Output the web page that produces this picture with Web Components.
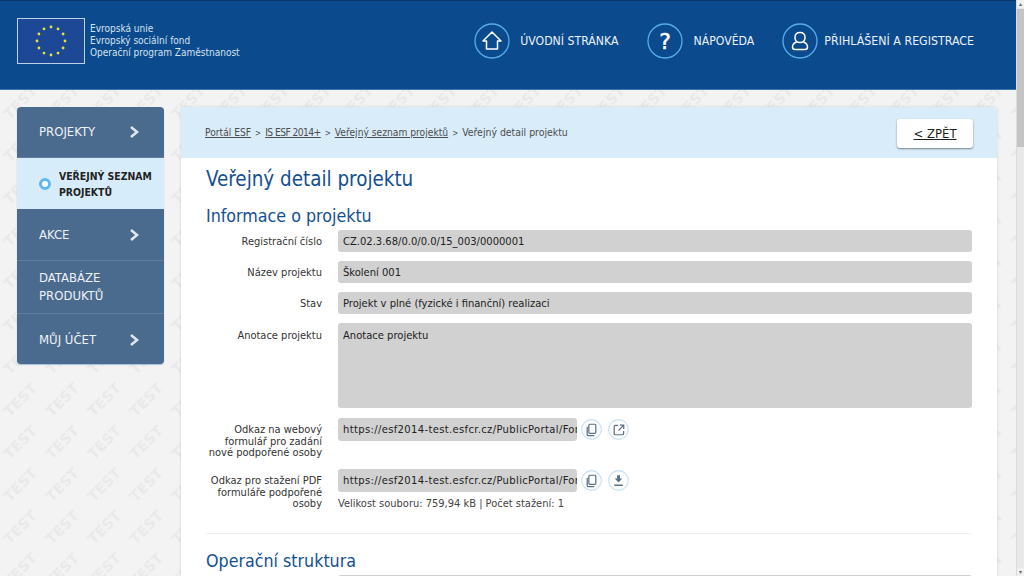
<!DOCTYPE html>
<html lang="cs"><head><meta charset="utf-8"><title>Veřejný detail projektu</title>
<style>
html,body{margin:0;padding:0;height:576px;overflow:hidden;background:#f3f3f3}
body{font-family:"DejaVu Sans Condensed","DejaVu Sans",sans-serif;color:#333}
</style></head><body>
<esf-page>
  <esf-header slot="header">
    <esf-nav icon="home">ÚVODNÍ STRÁNKA</esf-nav>
    <esf-nav icon="help">NÁPOVĚDA</esf-nav>
    <esf-nav icon="user">PŘIHLÁŠENÍ A REGISTRACE</esf-nav>
  </esf-header>
  <esf-menu slot="menu">
    <esf-menu-item arrow h="51">PROJEKTY</esf-menu-item>
    <esf-menu-item active h="51">VEŘEJNÝ SEZNAM PROJEKTŮ</esf-menu-item>
    <esf-menu-item arrow h="52">AKCE</esf-menu-item>
    <esf-menu-item h="53">DATABÁZE PRODUKTŮ</esf-menu-item>
    <esf-menu-item arrow last h="50">MŮJ ÚČET</esf-menu-item>
  </esf-menu>
  <esf-card slot="main">
    <esf-crumbs>
      <a href="#">Portál ESF</a><i>&gt;</i><a href="#" class="n">IS ESF 2014+</a><i>&gt;</i><a href="#">Veřejný seznam projektů</a><i>&gt;</i><span style="font-size:10.400px">Veřejný detail projektu</span>
    </esf-crumbs>
    <esf-section>
      <h1 slot="title">Veřejný detail projektu</h1>
    </esf-section>
    <esf-form heading="Informace o projektu">
      <esf-row label="Registrační číslo" h="22">CZ.02.3.68/0.0/0.0/15_003/0000001</esf-row>
      <esf-row label="Název projektu" h="22">Školení 001</esf-row>
      <esf-row label="Stav" h="22">Projekt v plné (fyzické i finanční) realizaci</esf-row>
      <esf-row label="Anotace projektu" h="85" top>Anotace projektu</esf-row>
      <esf-row label="Odkaz na webový formulář pro zadání nové podpořené osoby" h="23" narrow url actions="copy,open" rowh="42" style="margin-top:1px">https://esf2014-test.esfcr.cz/PublicPortal/Forms/Detail</esf-row>
      <esf-row label="Odkaz pro stažení PDF formuláře podpořené osoby" h="23" narrow url actions="copy,download" note="Velikost souboru: 759,94 kB | Počet stažení: 1">https://esf2014-test.esfcr.cz/PublicPortal/Forms/Download</esf-row>
    </esf-form>
    <esf-form heading="Operační struktura" ruled>
      <esf-row label="" h="22"></esf-row>
    </esf-form>
  </esf-card>
</esf-page>
<script>
const ce=(n,c)=>customElements.define(n,c);
class Base extends HTMLElement{
  render(html){ if(!this.shadowRoot) this.attachShadow({mode:'open'}); this.shadowRoot.innerHTML=html; }
}
ce('esf-page',class extends Base{connectedCallback(){this.render(`<style>
:host{display:block;position:relative;width:1024px;height:576px;overflow:hidden}
.wm{position:absolute;inset:0;width:1016px;height:576px}
.shell{position:relative;display:flex;width:1024px;height:576px}
.col{width:1016px;display:flex;flex-direction:column;overflow:hidden}
.body{display:grid;grid-template-columns:147px 816px;column-gap:17px;padding:17px 0 0 17px;align-items:start;flex:none}
.sb{width:8px;height:576px;background:#e9e9e9;display:flex;flex-direction:column;box-sizing:border-box;border-left:1px solid #dcdcdc}
.up,.dn{height:8px;background:#f1f1f1;color:#666;font:6px "DejaVu Sans",sans-serif;text-align:center;line-height:8px;flex:none}
.th{height:138px;margin-top:1px;background:#c4c4c4;flex:none}
.sp{flex:1}
</style>
<svg class="wm" aria-hidden="true"><defs><pattern id="t" width="42" height="42.500" patternUnits="userSpaceOnUse" patternTransform="translate(0,-3)">
<text x="0" y="0" transform="translate(21,21) rotate(-45)" text-anchor="middle" dominant-baseline="middle" font-family="DejaVu Sans" font-size="14.500" font-weight="bold" fill="#e9e9e9">TEST</text></pattern></defs>
<rect y="90" width="1016" height="486" fill="url(#t)"/></svg>
<div class="shell"><div class="col"><slot name="header"></slot><div class="body"><slot name="menu"></slot><slot name="main"></slot></div></div>
<div class="sb"><div class="up">▴</div><div class="th"></div><div class="sp"></div><div class="dn">▾</div></div></div>`)}});
ce('esf-header',class extends Base{connectedCallback(){
 let stars='';for(let i=0;i<12;i++){const a=i*Math.PI/6;stars+=`<circle cx="${(34+14*Math.sin(a)).toFixed(1)}" cy="${(23-14*Math.cos(a)).toFixed(1)}" r="1.4" fill="#e9e23a"/>`}
 this.render(`<style>
:host{display:flex;flex:none;box-sizing:border-box;height:90px;background:#0b4a8d;border-top:1px solid #0a3668;border-bottom:1px solid #3a76b0;padding:17px 42px 0 17px;align-items:flex-start;justify-content:space-between}
.logo{display:flex;align-items:center;gap:5px;color:#d5e2ef;font-size:10px;line-height:12px}
svg{display:block}
nav{display:flex;gap:29px;margin-top:5px}
</style>
<div class="logo"><svg width="68" height="46" viewBox="0 0 68 46"><rect x=".5" y=".5" width="67" height="45" fill="#1d4896" stroke="#bcd0e6"/>${stars}</svg><div>Evropská unie<br>Evropský sociální fond<br>Operační program Zaměstnanost</div></div>
<nav><slot></slot></nav>`)}});
const navIcons={
 home:'<path d="M18 9 L27 18 H23.500 V26 H12.500 V18 H9 Z" fill="none" stroke="#fff" stroke-width="1.500" stroke-linejoin="round"/>',
 help:'<text x="18" y="26" text-anchor="middle" font-family="DejaVu Sans" font-size="22" fill="#fff" stroke="#fff" stroke-width=".5">?</text>',
 user:'<path d="M18 9.5c3 0 5 2 5 5s-2 5-5 5-5-2-5-5 2-5 5-5zM14.5 19c-2.5 1-4 3-4 5 0 1.600 1 2.500 2.500 2.500h10c1.500 0 2.500-.9 2.500-2.500 0-2-1.500-4-4-5" fill="none" stroke="#fff" stroke-width="1.500"/>'};
ce('esf-nav',class extends Base{connectedCallback(){const ic=this.getAttribute('icon'),u=ic==='user';this.render(`<style>
:host{display:flex;align-items:center;gap:${u?6:10}px;color:#eaf1f8;font-size:${u?12.3:12.2}px;${u?'margin-left:-1px;':''}}
svg{display:block;flex:none}
</style><svg width="36" height="36" viewBox="0 0 36 36"><circle cx="18" cy="18" r="17" fill="none" stroke="#58ade9" stroke-width="1.300"/>${navIcons[ic]}</svg><span><slot></slot></span>`);
}});
ce('esf-menu',class extends Base{connectedCallback(){this.render(`<style>
:host{display:block;width:147px;border-radius:4px;overflow:hidden;background:#4a6a8e;box-shadow:0 1px 1px rgba(90,140,190,.5)}
</style><slot></slot>`)}});
ce('esf-menu-item',class extends Base{connectedCallback(){
 const a=this.hasAttribute('active'),ar=this.hasAttribute('arrow'),last=this.hasAttribute('last');
 this.render(`<style>
:host{display:flex;box-sizing:border-box;align-items:center;height:${this.getAttribute('h')}px;padding:${last?'2px':'0'} ${a?'4px':ar?'24px':'22px'} 0 22px;color:#eef2f7;font-size:13px;line-height:18px;${!a&&!last?'border-bottom:1px solid #5f7d9e;':''}${a?'background:#d7ecfb;color:#222;font-weight:700;font-size:10.400px;line-height:16px;':''}}
.t{flex:1}
.dot{width:6px;height:6px;border:3px solid #5fb8ee;border-radius:50%;background:#fff;margin:0 8px 0 0;flex:none;box-sizing:content-box}
</style>${a?'<span class="dot"></span>':''}<span class="t"><slot></slot></span>${ar?'<svg width="11" height="14" viewBox="0 0 11 14"><path d="M2 2 L8 7 L2 12" fill="none" stroke="#dfe6ee" stroke-width="2.600"/></svg>':''}`);
}});
ce('esf-card',class extends Base{connectedCallback(){this.render(`<style>
:host{display:block;width:816px;height:469px;overflow:hidden;background:#fff;border-radius:3px 3px 0 0;box-shadow:0 0 3px rgba(0,0,0,.14)}
</style><slot></slot>`)}});
ce('esf-crumbs',class extends Base{connectedCallback(){this.render(`<style>
:host{display:flex;align-items:center;box-sizing:border-box;height:51px;background:#d8ecfa;padding:0 24px;font-size:10.200px;color:#4d4d4d;border-radius:3px 3px 0 0}
.c{flex:1;margin-top:-1px}
a.b{font-size:13px;color:#222;background:#fff;border-radius:3px;width:76px;height:29px;display:flex;align-items:center;justify-content:center;text-decoration:underline;box-shadow:0 1px 2px rgba(0,0,0,.45);margin-top:1px}
</style><div class="c"><slot></slot></div><a class="b" href="#">&lt; ZPĚT</a>`);
 this.querySelectorAll('a').forEach(x=>{x.style.cssText='color:#4d4d4d;text-decoration:underline'+(x.className==='n'?';letter-spacing:-.55px':'')});
 this.querySelectorAll('i').forEach(x=>{x.style.cssText='font-style:normal;margin:0 4px;font-size:8px'});
}});
ce('esf-section',class extends Base{connectedCallback(){this.render(`<style>
:host{display:block;padding:9px 25px 0;height:38px;box-sizing:content-box}
::slotted(h1){margin:0;font-weight:400;font-size:20.400px;line-height:24px;color:#14508f}
</style><slot name="title"></slot>`)}});
ce('esf-form',class extends Base{connectedCallback(){const r=this.hasAttribute('ruled');this.render(`<style>
:host{display:block;padding:0 25px}
.rule{height:1px;background:#f0f0f0;margin:22px 0 16px}
h2{margin:0 0 3px;font-weight:400;font-size:17.700px;line-height:22px;color:#14508f}
.rows{display:flex;flex-direction:column;gap:9px}
</style>${r?'<div class="rule"></div>':''}<h2>${this.getAttribute('heading')}</h2><div class="rows"><slot></slot></div>`);
}});
const acts={
 copy:'<path d="M6.500 8v8.500a1 1 0 0 0 1 1H14" fill="none" stroke="#5c7089" stroke-width="1.300"/><rect x="8.700" y="6" width="7.300" height="9.500" rx="1" fill="none" stroke="#5c7089" stroke-width="1.300" transform="translate(-.5,-.5)"/>',
 open:'<path d="M10.500 6.700H7.500a1 1 0 0 0-1 1v7.800a1 1 0 0 0 1 1h7.800a1 1 0 0 0 1-1v-3M11 12l5-5M12.500 6.500h4v4" fill="none" stroke="#5c7089" stroke-width="1.300"/>',
 download:'<path d="M9.500 5.500h3V9h2.500l-4 4-4-4h2.500zM6.500 15.200h9v1.500h-9z" fill="#5c7089"/>'};
ce('esf-row',class extends Base{connectedCallback(){
 const h=+this.getAttribute('h'),n=this.hasAttribute('narrow'),u=this.hasAttribute('url'),note=this.getAttribute('note'),ac=(this.getAttribute('actions')||'').split(',').filter(Boolean),rowh=this.getAttribute('rowh'),tp=this.hasAttribute('top');
 this.render(`<style>
:host{display:grid;grid-template-columns:116px 634px;column-gap:16px;font-size:11.100px;${rowh?`min-height:${rowh}px;`:''}}
.l{text-align:right;color:#333;font-size:11px;${n?'line-height:11.500px;padding-top:6px;':tp?'line-height:26px;':`height:${h}px;line-height:${h+2}px;`}}
.fw{display:flex;align-items:center;gap:6px}
.f{box-sizing:border-box;height:${h}px;width:${n?'239px':'100%'};background:#d1d1d1;border-radius:3px;padding:${tp?'6px':u?'3px':'4px'} 3px 0 5px;line-height:${tp?'14px':(h-6)+'px'};color:#222;overflow:hidden;white-space:nowrap;flex:none;margin-right:${ac.length?'-2px':'0'};${u?'letter-spacing:.36px;':''}}
.n{color:#444;margin-top:4px;line-height:15px;font-size:11px}
svg{display:block;flex:none}
</style><div class="l">${this.getAttribute('label')}</div><div><div class="fw"><div class="f"><slot></slot></div>${ac.map(k=>`<svg width="21" height="21" viewBox="0 0 22 22"><circle cx="11" cy="11" r="10.300" fill="#fff" stroke="#c6dff2" stroke-width="1.200"/>${acts[k]}</svg>`).join('')}</div>${note?`<div class="n">${note}</div>`:''}</div>`)}});
</script></body></html>
